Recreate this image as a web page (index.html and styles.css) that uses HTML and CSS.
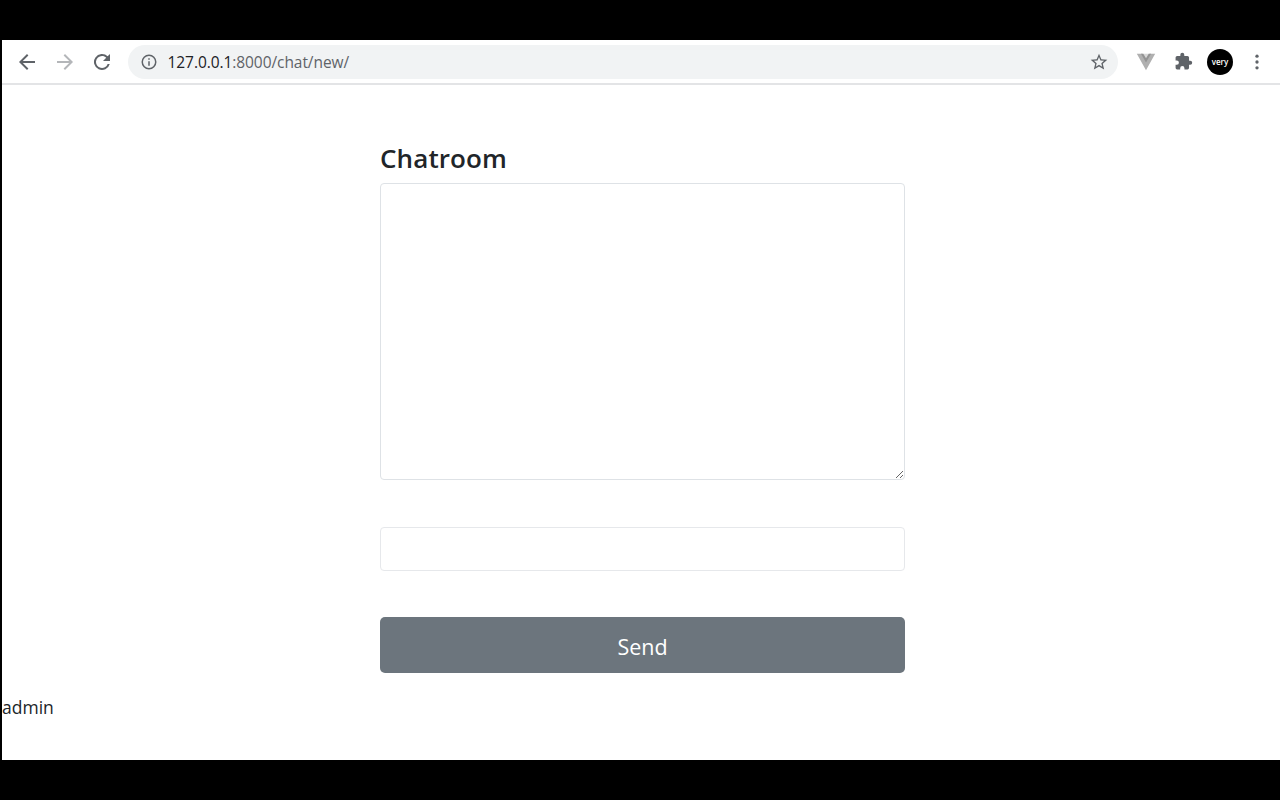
FILE: index.html
```html
<!DOCTYPE html>
<html lang="en">
<head>
    <meta charset="UTF-8">
    <meta name="viewport" content="width=device-width, initial-scale=1.0">
    <title>Chatroom</title>
    <link rel="stylesheet" href="styles.css">
</head>
<body>
    <div class="screen">
        <div class="toolbar">
            <svg class="nav-icon" viewBox="0 0 24 24"><path d="M20 11H7.8l5.6-5.6L12 4l-8 8 8 8 1.4-1.4L7.8 13H20z" fill="#5f6368"/></svg>
            <svg class="nav-icon" viewBox="0 0 24 24"><path d="M4 11h12.2l-5.6-5.6L12 4l8 8-8 8-1.4-1.4 5.6-5.6H4z" fill="#b4b6b9"/></svg>
            <svg class="nav-icon" viewBox="0 0 24 24"><path d="M17.65 6.35A8 8 0 1 0 19.73 14h-2.08A6 6 0 1 1 12 6c1.66 0 3.14.69 4.22 1.78L13 11h7V4z" fill="#5f6368"/></svg>
            <div class="address">
                <svg class="info-icon" viewBox="0 0 24 24"><path d="M11 7h2v2h-2zm0 4h2v6h-2zm1-9a10 10 0 1 0 0 20 10 10 0 0 0 0-20zm0 18a8 8 0 1 1 0-16 8 8 0 0 1 0 16z" fill="#5f6368"/></svg>
                <span class="url"><span class="host">127.0.0.1</span>:8000/chat/new/</span>
                <svg class="star-icon" viewBox="0 0 24 24"><path d="M22 9.24l-7.19-.62L12 2 9.19 8.63 2 9.24l5.46 4.73L5.82 21 12 17.27 18.18 21l-1.63-7.03L22 9.24zM12 15.4l-3.76 2.27 1-4.28-3.32-2.88 4.38-.38L12 6.1l1.71 4.04 4.38.38-3.32 2.88 1 4.28L12 15.4z" fill="#5f6368"/></svg>
            </div>
            <div class="extensions">
                <svg class="ext-icon" viewBox="0 0 24 24"><path d="M2 3h6l4 7 4-7h6L12 21z" fill="#b0b0b0"/><path d="M8 3h8l-4 7z" fill="#d8d8d8"/><path d="M6.5 3H9l3 5 3-5h2.500L12 12.500z" fill="#939393"/></svg>
                <svg class="puzzle-icon" viewBox="0 0 24 24"><path d="M20.5 11H19V7a2 2 0 0 0-2-2h-4V3.500a2.500 2.500 0 0 0-5 0V5H4a2 2 0 0 0-2 2v3.800h1.500a2.700 2.700 0 0 1 0 5.400H2V20a2 2 0 0 0 2 2h3.800v-1.500a2.700 2.700 0 0 1 5.400 0V22H17a2 2 0 0 0 2-2v-4h1.500a2.500 2.500 0 0 0 0-5z" fill="#5f6368"/></svg>
                <div class="avatar">very</div>
                <svg class="dots-icon" viewBox="0 0 24 24"><circle cx="12" cy="5" r="2" fill="#5f6368"/><circle cx="12" cy="12" r="2" fill="#5f6368"/><circle cx="12" cy="19" r="2" fill="#5f6368"/></svg>
            </div>
        </div>
        <div class="page">
            <div class="chat">
                <h1>Chatroom</h1>
                <textarea class="log"></textarea>
                <input class="message" type="text">
                <button class="send">Send</button>
            </div>
            <p class="user">admin</p>
        </div>
    </div>
</body>
</html>
```

FILE: styles.css
```css
* {
    margin: 0;
    padding: 0;
    box-sizing: border-box;
}
body {
    background-color: #000;
    height: 800px;
    padding: 40px 0 40px 2px;
    overflow: hidden;
    font-family: "Open Sans", "Noto Sans", sans-serif;
}
.screen {
    background-color: #fff;
    height: 720px;
    display: flex;
    flex-direction: column;
}
.toolbar {
    height: 45px;
    display: flex;
    align-items: center;
    border-bottom: 2px solid #e3e4e6;
    padding-left: 13px;
}
.nav-icon {
    width: 24px;
    height: 24px;
    margin-right: 13.5px;
}
.address {
    width: 990px;
    height: 34px;
    background-color: #f1f3f4;
    border-radius: 17px;
    display: flex;
    align-items: center;
    padding: 0 9px 0 12px;
}
.info-icon {
    width: 18px;
    height: 18px;
    margin-right: 10px;
}
.url {
    font-size: 15.5px;
    letter-spacing: -0.07px;
    color: #5f6368;
    flex: 1;
}
.host {
    color: #202124;
}
.star-icon {
    width: 20px;
    height: 20px;
}
.extensions {
    display: grid;
    grid-template-columns: repeat(4, 37px);
    justify-items: center;
    align-items: center;
    margin-left: 10px;
}
.ext-icon {
    width: 22px;
    height: 22px;
}
.puzzle-icon {
    width: 19px;
    height: 19px;
}
.dots-icon {
    width: 20px;
    height: 20px;
}
.avatar {
    width: 26px;
    height: 26px;
    border-radius: 50%;
    background-color: #000;
    color: #fff;
    font-size: 8px;
    font-weight: 600;
    display: flex;
    align-items: center;
    justify-content: center;
}
.page {
    flex: 1;
    display: flex;
    flex-direction: column;
}
.chat {
    width: 525px;
    margin-left: 378px;
    padding-top: 55px;
    display: flex;
    flex-direction: column;
}
h1 {
    font-size: 26px;
    letter-spacing: 0.1px;
    line-height: 36px;
    font-weight: 600;
    color: #212529;
    margin-bottom: 7px;
}
.log {
    height: 297px;
    border: 1px solid #dee2e6;
    border-radius: 4px;
    background-color: #fff;
    margin-bottom: 47px;
    outline: none;
}
.message {
    height: 44px;
    border: 1px solid #e6e8eb;
    border-radius: 4px;
    background-color: #fff;
    margin-bottom: 46px;
}
.send {
    height: 56px;
    padding-top: 2px;
    background-color: #6c757d;
    color: #fff;
    border: none;
    border-radius: 5px;
    font-family: inherit;
    font-size: 21.5px;
}
.user {
    margin-top: 22px;
    font-size: 17.5px;
    line-height: 24px;
    color: #212529;
}
```
